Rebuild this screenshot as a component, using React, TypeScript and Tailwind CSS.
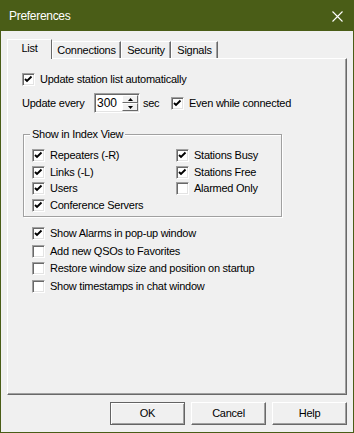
import React from "react";

function Check({ checked }: { checked: boolean }) {
  return (
    <span className="w-[13px] h-[13px] shrink-0 box-border border border-t-[#a0a0a0] border-l-[#a0a0a0] border-b-white border-r-white bg-white shadow-[inset_1px_1px_0_#696969,inset_-1px_-1px_0_#e3e3e3] flex items-center justify-center">
      {checked && (
        <svg width="11" height="11" viewBox="0 0 11 11">
          <path d="M2 5 L4 7 L8.5 2.5" stroke="#000" strokeWidth="1.9" fill="none" />
        </svg>
      )}
    </span>
  );
}

function CheckRow({ checked, label, className = "" }: { checked: boolean; label: string; className?: string }) {
  return (
    <div className={`flex items-center h-[13px] gap-[5px] ${className}`}>
      <Check checked={checked} />
      <span className="leading-[13px] whitespace-nowrap">{label}</span>
    </div>
  );
}

function Btn({ label, def = false }: { label: string; def?: boolean }) {
  return (
    <div
      className={`w-[75px] h-[23px] box-border flex items-center justify-center bg-[#f0f0f0] ${
        def
          ? "border border-[#646464] shadow-[inset_1px_1px_0_#fff,inset_-1px_-1px_0_#a0a0a0]"
          : "border border-t-white border-l-white border-b-[#696969] border-r-[#696969] shadow-[inset_-1px_-1px_0_#a0a0a0]"
      }`}
    >
      {label}
    </div>
  );
}

export default function App() {
  return (
    <div className="w-[354px] h-[433px] box-border border border-[#4a5d17] bg-[#f0f0f0] flex flex-col font-['Liberation_Sans',Arial,sans-serif] text-[11px] tracking-[-0.25px] text-black overflow-hidden">
      {/* title bar */}
      <div className="h-[30px] shrink-0 bg-[#4a5d17] flex items-center justify-between pl-[8px] pr-[10px]">
        <span className="text-white text-[12px] tracking-[-0.3px]">Preferences</span>
        <svg width="11" height="11" viewBox="0 0 11 11">
          <path d="M0.5 0.5 L10.5 10.5 M10.5 0.5 L0.5 10.5" stroke="#fff" strokeWidth="1.1" />
        </svg>
      </div>

      <div className="flex flex-col px-[6px] pt-[8px]">
        {/* tabs */}
        <div className="flex items-end h-[20px] mb-[-1px] relative z-10">
          <div className="w-[45px] h-[20px] box-border bg-[#f0f0f0] border-t border-l border-white border-r border-r-[#696969] flex items-center justify-center pb-[2px]">
            List
          </div>
          <div className="w-[69px] h-[17px] mb-[1px] box-border border-t border-l border-white border-r border-r-[#696969] shadow-[inset_-1px_0_0_#a0a0a0] flex items-center justify-center">
            Connections
          </div>
          <div className="w-[50px] h-[17px] mb-[1px] box-border border-t border-l border-white border-r border-r-[#696969] shadow-[inset_-1px_0_0_#a0a0a0] flex items-center justify-center">
            Security
          </div>
          <div className="w-[47px] h-[17px] mb-[1px] box-border border-t border-l border-white border-r border-r-[#696969] shadow-[inset_-1px_0_0_#a0a0a0] flex items-center justify-center">
            Signals
          </div>
        </div>

        {/* panel */}
        <div className="w-[340px] h-[337px] box-border border border-t-white border-l-white border-b-[#696969] border-r-[#696969] shadow-[inset_-1px_-1px_0_#a0a0a0] flex flex-col pl-[14px] pt-[14px]">
          <CheckRow checked label="Update station list automatically" />

          <div className="flex items-center h-[20px] mt-[7px]">
            <span className="w-[72px] whitespace-nowrap">Update every</span>
            <div className="w-[46px] h-[20px] box-border border border-t-[#a0a0a0] border-l-[#a0a0a0] border-b-white border-r-white bg-white shadow-[inset_1px_1px_0_#696969,inset_-1px_-1px_0_#e3e3e3] flex items-center justify-between pl-[2px] pr-[1px]">
              <span className="text-[12px] tracking-[0px] leading-[14px]">300</span>
              <div className="flex flex-col w-[16px] h-[16px]">
                <div className="h-[8px] box-border border border-t-white border-l-white border-b-[#696969] border-r-[#696969] bg-[#f0f0f0] flex items-center justify-center">
                  <svg width="5" height="3" viewBox="0 0 5 3"><path d="M2.5 0 L5 3 L0 3 Z" fill="#000" /></svg>
                </div>
                <div className="h-[8px] box-border border border-t-white border-l-white border-b-[#696969] border-r-[#696969] bg-[#f0f0f0] flex items-center justify-center">
                  <svg width="5" height="3" viewBox="0 0 5 3"><path d="M0 0 L5 0 L2.5 3 Z" fill="#000" /></svg>
                </div>
              </div>
            </div>
            <span className="w-[31px] pl-[3px]">sec</span>
            <CheckRow checked label="Even while connected" />
          </div>

          {/* group box */}
          <div className="relative mt-[21px] ml-[1px] w-[259px] h-[83px] box-border border border-[#a0a0a0] shadow-[1px_1px_0_#fff,inset_1px_1px_0_#fff] pl-[8px] pt-[14px]">
            <span className="absolute -top-[7px] left-[6px] bg-[#f0f0f0] px-[2px] leading-[13px]">Show in Index View</span>
            <div className="grid grid-cols-[144px_1fr]">
              <div className="flex flex-col">
                <CheckRow checked label="Repeaters (-R)" />
                <CheckRow checked label="Links (-L)" className="mt-[4px]" />
                <CheckRow checked label="Users" className="mt-[3px]" />
                <CheckRow checked label="Conference Servers" className="mt-[4px]" />
              </div>
              <div className="flex flex-col">
                <CheckRow checked label="Stations Busy" />
                <CheckRow checked label="Stations Free" className="mt-[4px]" />
                <CheckRow checked={false} label="Alarmed Only" className="mt-[3px]" />
              </div>
            </div>
          </div>

          <div className="flex flex-col ml-[10px] mt-[10px]">
            <CheckRow checked label="Show Alarms in pop-up window" />
            <CheckRow checked={false} label="Add new QSOs to Favorites" className="mt-[5px]" />
            <CheckRow checked={false} label="Restore window size and position on startup" className="mt-[4px]" />
            <CheckRow checked={false} label="Show timestamps in chat window" className="mt-[5px]" />
          </div>
        </div>

        {/* buttons */}
        <div className="flex justify-end gap-[6px] mt-[7px]">
          <Btn label="OK" def />
          <Btn label="Cancel" />
          <Btn label="Help" />
        </div>
      </div>
    </div>
  );
}
